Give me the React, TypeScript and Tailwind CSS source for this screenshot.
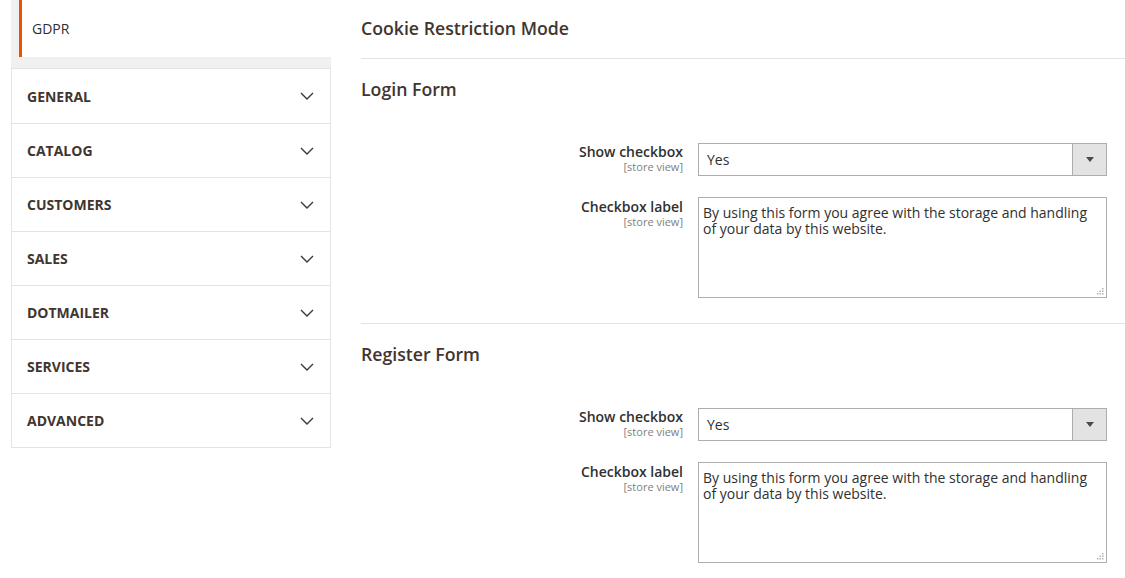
import React from 'react'

const NAV_ITEMS = ['GENERAL', 'CATALOG', 'CUSTOMERS', 'SALES', 'DOTMAILER', 'SERVICES', 'ADVANCED']

const CHECKBOX_TEXT = 'By using this form you agree with the storage and handling of your data by this website.'

function Chevron() {
  return (
    <svg width="14" height="8" viewBox="0 0 14 8" fill="none" className="text-[#41362f]">
      <path d="M1 1 L7 7 L13 1" stroke="currentColor" strokeWidth="1.4" />
    </svg>
  )
}

function ResizeDots() {
  return (
    <svg width="7" height="7" viewBox="0 0 7 7" className="absolute bottom-[3px] right-[3px] pointer-events-none">
      <rect x="5" y="0" width="1.5" height="1.5" fill="#b5b5b5" />
      <rect x="2.5" y="2.5" width="1.5" height="1.5" fill="#b5b5b5" />
      <rect x="5" y="2.5" width="1.5" height="1.5" fill="#b5b5b5" />
      <rect x="0" y="5" width="1.5" height="1.5" fill="#b5b5b5" />
      <rect x="2.5" y="5" width="1.5" height="1.5" fill="#b5b5b5" />
      <rect x="5" y="5" width="1.5" height="1.5" fill="#b5b5b5" />
    </svg>
  )
}

function FieldLabel({ title }: { title: string }) {
  return (
    <div className="w-[322px] shrink-0 text-right">
      <div className="text-[14px] font-semibold leading-[16px] text-[#303030]">{title}</div>
      <div className="text-[11px] leading-[13px] text-[#808080]">[store view]</div>
    </div>
  )
}

function FormSection({ title }: { title: string }) {
  return (
    <section>
      <h2 className="pt-[18px] text-[17.7px] leading-[24px] font-semibold text-[#41362f]">{title}</h2>

      <div className="mt-[42px] flex items-start gap-[15px]">
        <div className="pt-[1px]">
          <FieldLabel title="Show checkbox" />
        </div>
        <div className="w-[409px] h-[33px] flex border border-[#adadad] bg-white">
          <div className="flex-1 flex items-center pl-[8px] pb-[1px] text-[14px] text-[#303030]">Yes</div>
          <div className="w-[34px] flex items-center justify-center bg-[#e3e3e3] border-l border-[#adadad]">
            <svg width="8" height="5" viewBox="0 0 8 5">
              <path d="M0 0 H8 L4 5 Z" fill="#514943" />
            </svg>
          </div>
        </div>
      </div>

      <div className="mt-[21px] flex items-start gap-[15px]">
        <div className="pt-[2px]">
          <FieldLabel title="Checkbox label" />
        </div>
        <div className="relative w-[409px] h-[101px]">
          <textarea
            readOnly
            defaultValue={CHECKBOX_TEXT}
            className="w-full h-full resize-none border border-[#adadad] bg-white pl-[4px] pr-[10px] pt-[7px] text-[14px] leading-[16px] text-[#303030] outline-none font-['Open_Sans',sans-serif]"
          />
          <ResizeDots />
        </div>
      </div>
    </section>
  )
}

export default function App() {
  return (
    <div className="flex bg-white min-h-[578px] font-['Open_Sans',sans-serif] text-[#303030]">
      {/* Sidebar */}
      <aside className="ml-[11px] w-[320px] shrink-0">
        <div className="bg-[#f0f0f0] pl-[8px] pb-[11px]">
          <div className="h-[57px] flex items-center bg-white border-l-[3px] border-[#eb5202] pl-[10px] text-[14px] text-[#303030]">
            GDPR
          </div>
        </div>
        <ul className="border border-[#e3e3e3]">
          {NAV_ITEMS.map((item, i) => (
            <li
              key={item}
              className={`h-[54px] flex items-center justify-between pl-[15px] pr-[16px] bg-white ${
                i > 0 ? 'border-t border-[#e3e3e3]' : ''
              }`}
            >
              <span className="text-[14px] font-bold text-[#41362f]">{item}</span>
              <Chevron />
            </li>
          ))}
        </ul>
      </aside>

      {/* Main content */}
      <main className="ml-[30px] flex-1">
        <div className="h-[59px] pb-[2px] flex items-center border-b border-[#e3e3e3]">
          <h1 className="text-[17.7px] font-semibold text-[#41362f]">Cookie Restriction Mode</h1>
        </div>

        <div className="mr-[18px]">
          <FormSection title="Login Form" />
        </div>

        <div className="mt-[25px] border-t border-[#e3e3e3]">
          <FormSection title="Register Form" />
        </div>
      </main>
    </div>
  )
}
